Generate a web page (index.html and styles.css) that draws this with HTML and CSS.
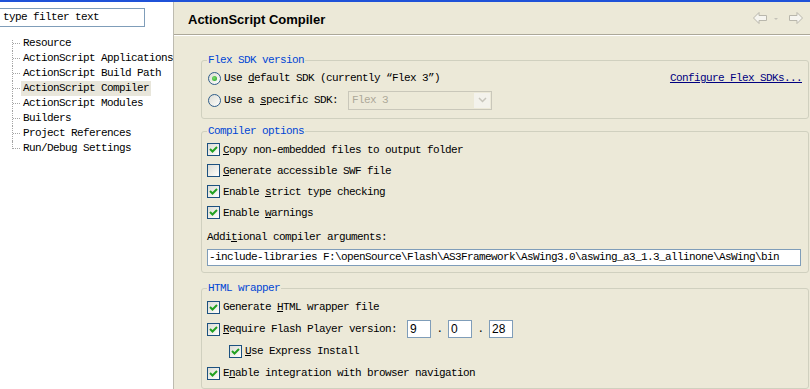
FILE: index.html
```html
<!DOCTYPE html>
<html>
<head>
<meta charset="utf-8">
<link rel="stylesheet" href="styles.css">
</head>
<body>
<div class="topbar"></div>
<div class="main">
  <aside class="nav">
    <div class="filter">type filter text</div>
    <ul class="tree">
      <li><span>Resource</span></li>
      <li><span>ActionScript Applications</span></li>
      <li><span>ActionScript Build Path</span></li>
      <li class="sel"><span>ActionScript Compiler</span></li>
      <li><span>ActionScript Modules</span></li>
      <li><span>Builders</span></li>
      <li><span>Project References</span></li>
      <li><span>Run/Debug Settings</span></li>
    </ul>
  </aside>
  <section class="page">
    <header class="page-head">
      <h1>ActionScript Compiler</h1>
      <div class="navbtns">
        <svg width="52" height="14" viewBox="0 0 52 14">
          <path d="M1.5 7 L7 1.5 L7 4.5 L14.5 4.5 L14.5 9.5 L7 9.5 L7 12.5 Z" fill="#F6F5F0" stroke="#B9B7AC" stroke-width="1"/>
          <path d="M22 7 L26 7 L24 9 Z" fill="#C4C2B8"/>
          <path d="M50.5 7 L45 1.5 L45 4.5 L37.5 4.5 L37.5 9.5 L45 9.5 L45 12.5 Z" fill="#F6F5F0" stroke="#B9B7AC" stroke-width="1"/>
        </svg>
      </div>
    </header>
    <div class="content">
      <fieldset class="grp g1">
        <legend>Flex SDK version</legend>
        <div class="row">
          <span class="radio on"><i></i></span>
          <span class="lbl">Use <u>d</u>efault SDK (currently “Flex 3”)</span>
          <a class="link">Configure Flex SDKs...</a>
        </div>
        <div class="row">
          <span class="radio"></span>
          <span class="lbl">Use a <u>s</u>pecific SDK:</span>
          <div class="combo">
            <span class="combo-text">Flex 3</span>
            <span class="combo-btn">
              <svg width="9" height="6" viewBox="0 0 9 6"><path d="M1 1 L4.5 4.5 L8 1" fill="none" stroke="#C7C5BC" stroke-width="1.5"/></svg>
            </span>
          </div>
        </div>
      </fieldset>

      <fieldset class="grp g2">
        <legend>Compiler options</legend>
        <div class="row">
          <span class="cb on"><svg width="9" height="9" viewBox="0 0 9 9"><path d="M1 4 L3.5 6.5 L8 2" fill="none" stroke="#21A121" stroke-width="2"/></svg></span>
          <span class="lbl"><u>C</u>opy non-embedded files to output folder</span>
        </div>
        <div class="row">
          <span class="cb"></span>
          <span class="lbl"><u>G</u>enerate accessible SWF file</span>
        </div>
        <div class="row">
          <span class="cb on"><svg width="9" height="9" viewBox="0 0 9 9"><path d="M1 4 L3.5 6.5 L8 2" fill="none" stroke="#21A121" stroke-width="2"/></svg></span>
          <span class="lbl">Enable <u>s</u>trict type checking</span>
        </div>
        <div class="row">
          <span class="cb on"><svg width="9" height="9" viewBox="0 0 9 9"><path d="M1 4 L3.5 6.5 L8 2" fill="none" stroke="#21A121" stroke-width="2"/></svg></span>
          <span class="lbl">Enable <u>w</u>arnings</span>
        </div>
        <div class="args-label">Addi<u>t</u>ional compiler arguments:</div>
        <div class="textfield">-include-libraries F:\openSource\Flash\AS3Framework\AsWing3.0\aswing_a3_1.3_allinone\AsWing\bin</div>
      </fieldset>

      <fieldset class="grp g3">
        <legend>HTML wrapper</legend>
        <div class="row">
          <span class="cb on"><svg width="9" height="9" viewBox="0 0 9 9"><path d="M1 4 L3.5 6.5 L8 2" fill="none" stroke="#21A121" stroke-width="2"/></svg></span>
          <span class="lbl">Generate <u>H</u>TML wrapper file</span>
        </div>
        <div class="row">
          <span class="cb on"><svg width="9" height="9" viewBox="0 0 9 9"><path d="M1 4 L3.5 6.5 L8 2" fill="none" stroke="#21A121" stroke-width="2"/></svg></span>
          <span class="lbl"><u>R</u>equire Flash Player version:</span>
          <span class="num first">9</span>
          <span class="dot">.</span>
          <span class="num">0</span>
          <span class="dot">.</span>
          <span class="num">28</span>
        </div>
        <div class="row indent">
          <span class="cb on"><svg width="9" height="9" viewBox="0 0 9 9"><path d="M1 4 L3.5 6.5 L8 2" fill="none" stroke="#21A121" stroke-width="2"/></svg></span>
          <span class="lbl"><u>U</u>se Express Install</span>
        </div>
        <div class="row">
          <span class="cb on"><svg width="9" height="9" viewBox="0 0 9 9"><path d="M1 4 L3.5 6.5 L8 2" fill="none" stroke="#21A121" stroke-width="2"/></svg></span>
          <span class="lbl">E<u>n</u>able integration with browser navigation</span>
        </div>
      </fieldset>
    </div>
  </section>
</div>
</body>
</html>
```

FILE: styles.css
```css
* { box-sizing: border-box; }
html, body { margin: 0; padding: 0; }
body {
  width: 810px;
  height: 389px;
  overflow: hidden;
  background: #ECE9D8;
  font-family: "Liberation Mono", "DejaVu Sans Mono", monospace;
  font-size: 11px;
  letter-spacing: -0.6px;
  color: #000;
}
.topbar { height: 2px; background: #1F52D8; }
.main { display: flex; height: 387px; }

/* left navigation */
.nav {
  flex: none;
  width: 174px;
  background: #fff;
  border-right: 1px solid #BDBBB0;
  overflow: hidden;
}
.filter {
  margin-top: 6px;
  width: 145px;
  height: 19px;
  border: 1px solid #7F9DB9;
  border-left: 0;
  padding-left: 3px;
  line-height: 17px;
  white-space: nowrap;
}
.tree {
  list-style: none;
  margin: 9px 0 0;
  padding: 0 0 0 21px;
}
.tree li {
  position: relative;
  height: 15px;
  line-height: 15px;
  white-space: nowrap;
}
.tree li span { display: inline-block; padding: 0 2px; }
.tree li.sel span { background: #E8E6DB; }
.tree li::before {
  content: "";
  position: absolute;
  left: -8px;
  top: 7px;
  width: 7px;
  border-top: 1px dotted #A5A5A5;
}
.tree li::after {
  content: "";
  position: absolute;
  left: -9px;
  top: 0;
  height: 15px;
  border-left: 1px dotted #A5A5A5;
}
.tree li:first-child::after { top: 4px; height: 11px; }
.tree li:last-child::after { height: 8px; }

/* right page */
.page { flex: 1; min-width: 0; display: flex; flex-direction: column; }
.page-head {
  height: 35px;
  border-bottom: 1px solid #ACA899;
  display: flex;
  align-items: center;
  padding: 3px 6px 0 14px;
}
.page-head h1 {
  margin: 0;
  font-family: "Liberation Sans", Arial, sans-serif;
  font-weight: bold;
  font-size: 13px;
  letter-spacing: 0;
}
.navbtns { margin-left: auto; display: flex; margin-top: -3px; }

.content {
  border-top: 1px solid #fff;
  padding: 17px 1px 0 27px;
}

.grp {
  margin: 0;
  min-width: 0;
  border: 1px solid #D0D0BF;
  border-radius: 3px;
  padding: 0 6px 4px 5px;
}
.grp legend {
  padding: 0 1px;
  color: #0046D5;
  line-height: 15px;
  height: 15px;
}
.g1 { padding-bottom: 7px; }
.g1 .row:first-of-type { margin-top: -1px; }
.g2 { margin-top: 5px; padding-right: 7px; padding-bottom: 6px; }
.g3 { margin-top: 8px; padding-bottom: 4px; }

.row { display: flex; align-items: center; height: 22px; white-space: nowrap; }
.g2 .row { height: 21px; }
.indent { padding-left: 22px; }

.cb {
  flex: none;
  width: 13px;
  height: 13px;
  border: 1px solid #1C5180;
  background: linear-gradient(135deg, #DCDCD5 0%, #F4F4F0 70%, #fff 100%);
  margin-right: 3px;
  display: flex;
  align-items: center;
  justify-content: center;
}
.radio {
  flex: none;
  width: 13px;
  height: 13px;
  border: 1px solid #2F5D8A;
  border-radius: 50%;
  background: linear-gradient(135deg, #DCDCD5 0%, #F4F4F0 70%, #fff 100%);
  margin: 0 3px 0 1px;
  display: flex;
  align-items: center;
  justify-content: center;
}
.radio i {
  width: 5px;
  height: 5px;
  border-radius: 50%;
  background: radial-gradient(circle at 40% 40%, #7DDB6E, #21A121);
}
.link {
  margin-left: auto;
  color: #000080;
  text-decoration: underline;
}

.combo {
  margin-left: 10px;
  width: 144px;
  height: 19px;
  border: 1px solid #C9C7BA;
  display: flex;
  align-items: center;
}
.combo-text { flex: 1; padding-left: 3px; color: #ACA899; }
.combo-btn {
  width: 16px;
  height: 15px;
  margin-right: 1px;
  background: #F3F2EC;
  display: flex;
  align-items: center;
  justify-content: center;
}

.args-label { margin-top: 6px; line-height: 16px; }
.textfield {
  margin-top: 4px;
  height: 17px;
  border: 1px solid #7F9DB9;
  background: #fff;
  padding-left: 1px;
  line-height: 15px;
  white-space: nowrap;
  overflow: hidden;
}

.num {
  width: 24px;
  height: 18px;
  border: 1px solid #7F9DB9;
  background: #fff;
  font-family: "Liberation Sans", Arial, sans-serif;
  font-size: 12px;
  letter-spacing: 0;
  line-height: 16px;
  padding-left: 2px;
}
.num.first { margin-left: 10px; }
.dot { width: 17px; text-align: center; }
```
